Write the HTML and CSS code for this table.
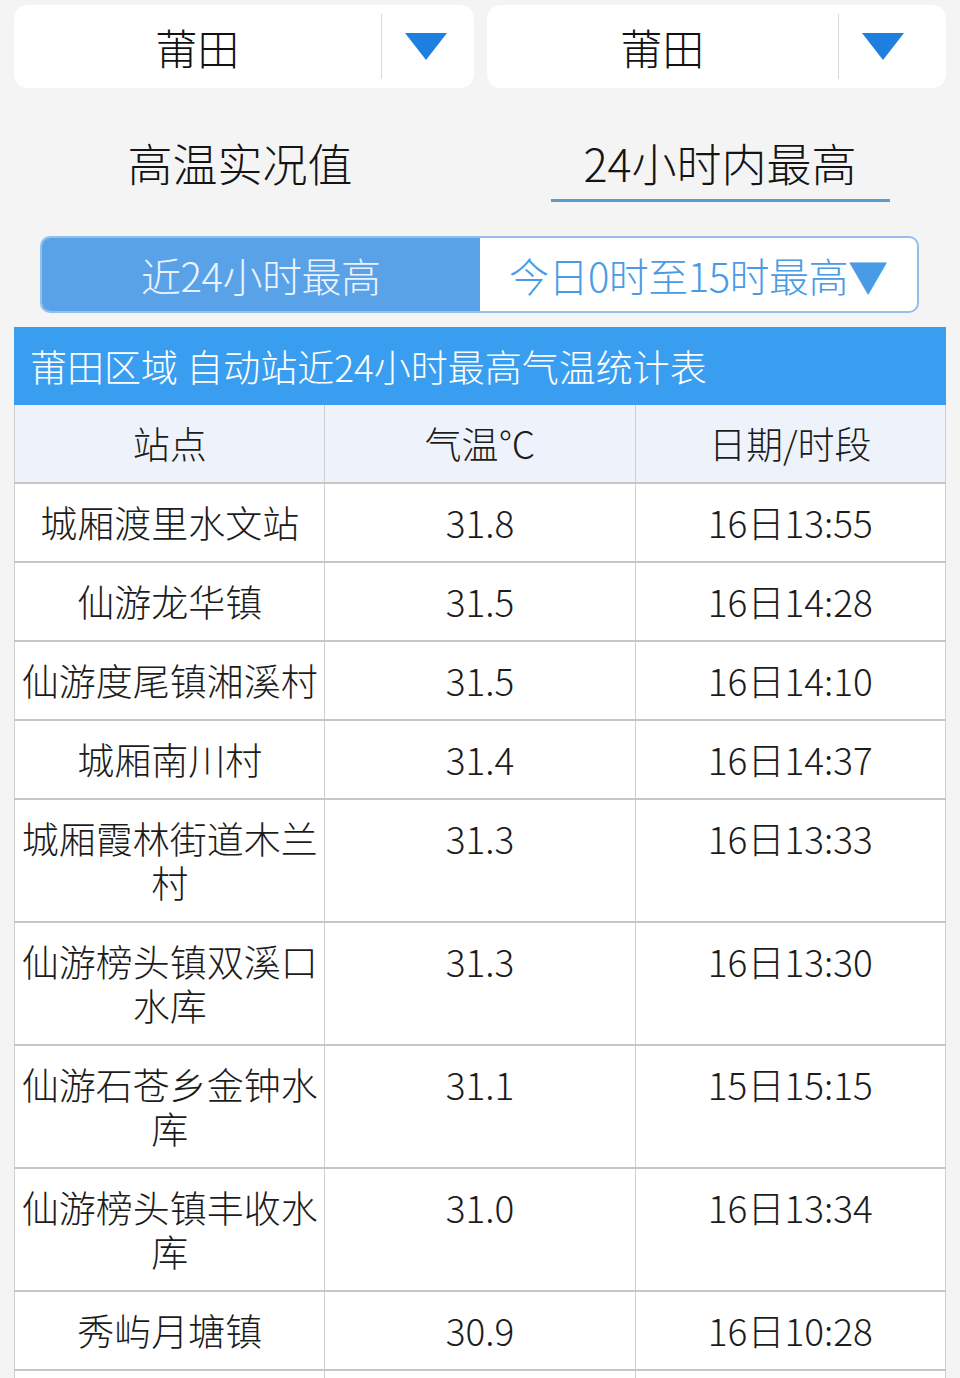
FILE: index.html
```html
<!DOCTYPE html>
<html lang="zh-CN">
<head>
<meta charset="utf-8">
<title>莆田 高温实况</title>
<link rel="stylesheet" href="styles.css">
</head>
<body>
<div class="selects">
  <div class="dd">
    <div class="dd-label">莆田</div>
    <div class="dd-btn dd-btn-a"><svg class="tri" viewBox="0 0 42 27" width="42" height="27"><polygon points="0,0 42,0 21,27" fill="#1f7fe0"/></svg></div>
  </div>
  <div class="dd">
    <div class="dd-label">莆田</div>
    <div class="dd-btn dd-btn-b"><svg class="tri" viewBox="0 0 42 27" width="42" height="27"><polygon points="0,0 42,0 21,27" fill="#1f7fe0"/></svg></div>
  </div>
</div>

<div class="tabs">
  <div class="tab"><span class="tab-text">高温实况值</span></div>
  <div class="tab active"><span class="tab-text">24小时内最高</span></div>
</div>

<div class="seg">
  <div class="seg-item on">近24小时最高</div>
  <div class="seg-item">今日0时至15时最高▼</div>
</div>

<div class="board">
  <div class="title">莆田区域 自动站近24小时最高气温统计表</div>
  <table class="grid">
    <thead>
      <tr><th>站点</th><th>气温℃</th><th>日期/时段</th></tr>
    </thead>
    <tbody>
      <tr><td>城厢渡里水文站</td><td>31.8</td><td>16日13:55</td></tr>
      <tr><td>仙游龙华镇</td><td>31.5</td><td>16日14:28</td></tr>
      <tr><td>仙游度尾镇湘溪村</td><td>31.5</td><td>16日14:10</td></tr>
      <tr><td>城厢南川村</td><td>31.4</td><td>16日14:37</td></tr>
      <tr><td>城厢霞林街道木兰村</td><td>31.3</td><td>16日13:33</td></tr>
      <tr><td>仙游榜头镇双溪口水库</td><td>31.3</td><td>16日13:30</td></tr>
      <tr><td>仙游石苍乡金钟水库</td><td>31.1</td><td>15日15:15</td></tr>
      <tr><td>仙游榜头镇丰收水库</td><td>31.0</td><td>16日13:34</td></tr>
      <tr><td>秀屿月塘镇</td><td>30.9</td><td>16日10:28</td></tr>
      <tr><td>&nbsp;</td><td>&nbsp;</td><td>&nbsp;</td></tr>
    </tbody>
  </table>
</div>
</body>
</html>
```

FILE: styles.css
```css
* { box-sizing: border-box; }
html, body { margin: 0; padding: 0; }
body {
  background: #f4f4f4;
  font-family: "Noto Sans CJK SC", "Noto Sans", sans-serif;
  color: #1c1c1c;
  width: 960px;
  overflow: hidden;
}

.selects {
  display: flex;
  gap: 13px;
  padding: 5px 14px 0 14px;
}
.dd {
  flex: 1;
  height: 83px;
  background: #ffffff;
  border-radius: 14px;
  display: flex;
  align-items: center;
}
.dd-label {
  flex: 1;
  text-align: center;
  font-size: 42px;
  line-height: 1;
  color: #111;
  font-weight: 300;
}
.dd-btn {
  height: 65px;
  border-left: 1px solid #d9d9d9;
  display: flex;
  align-items: center;
  padding-left: 23px;
}
.dd-btn-a { width: 93px; }
.dd-btn-b { width: 108px; }
.tri { display: block; }

.tabs {
  display: flex;
  padding-top: 47px;
}
.tab {
  flex: 1;
  display: flex;
  justify-content: center;
}
.tab-text {
  display: block;
  font-size: 45px;
  line-height: 56px;
  padding-bottom: 8px;
  text-align: center;
  color: #141414;
  font-weight: 300;
  border-bottom: 3px solid transparent;
}
.tab.active .tab-text {
  width: 339px;
  border-bottom-color: #5c9ccb;
}

.seg {
  margin: 34px 41px 0 40px;
  height: 77px;
  display: flex;
  border: 2px solid #93bfe9;
  border-radius: 10px;
  overflow: hidden;
  background: #fff;
}
.seg-item {
  flex: 1;
  display: flex;
  align-items: center;
  justify-content: center;
  font-size: 40px;
  font-weight: 300;
  color: #4a9be6;
  letter-spacing: -0.5px;
}
.seg-item.on {
  background: #5aa2e8;
  color: #eaf3ff;
}

.board {
  margin: 14px 14px 0 14px;
}
.title {
  background: #3a9ef0;
  color: #ffffff;
  height: 78px;
  display: flex;
  align-items: center;
  padding-left: 16px;
  font-size: 37px;
  font-weight: 300;
  white-space: nowrap;
}
.grid {
  width: 100%;
  border-collapse: collapse;
  table-layout: fixed;
  background: #ffffff;
}
.grid th, .grid td {
  width: 33.333%;
  text-align: center;
  vertical-align: top;
  font-size: 37px;
  line-height: 44px;
  font-weight: 300;
  padding: 16px 6px 17px 6px;
  border-left: 1px solid #cfcfcf;
  border-right: 1px solid #cfcfcf;
  border-bottom: 2px solid #c6c6c6;
  color: #1c1c1c;
}
.grid th {
  background: #eef3fb;
}
```
